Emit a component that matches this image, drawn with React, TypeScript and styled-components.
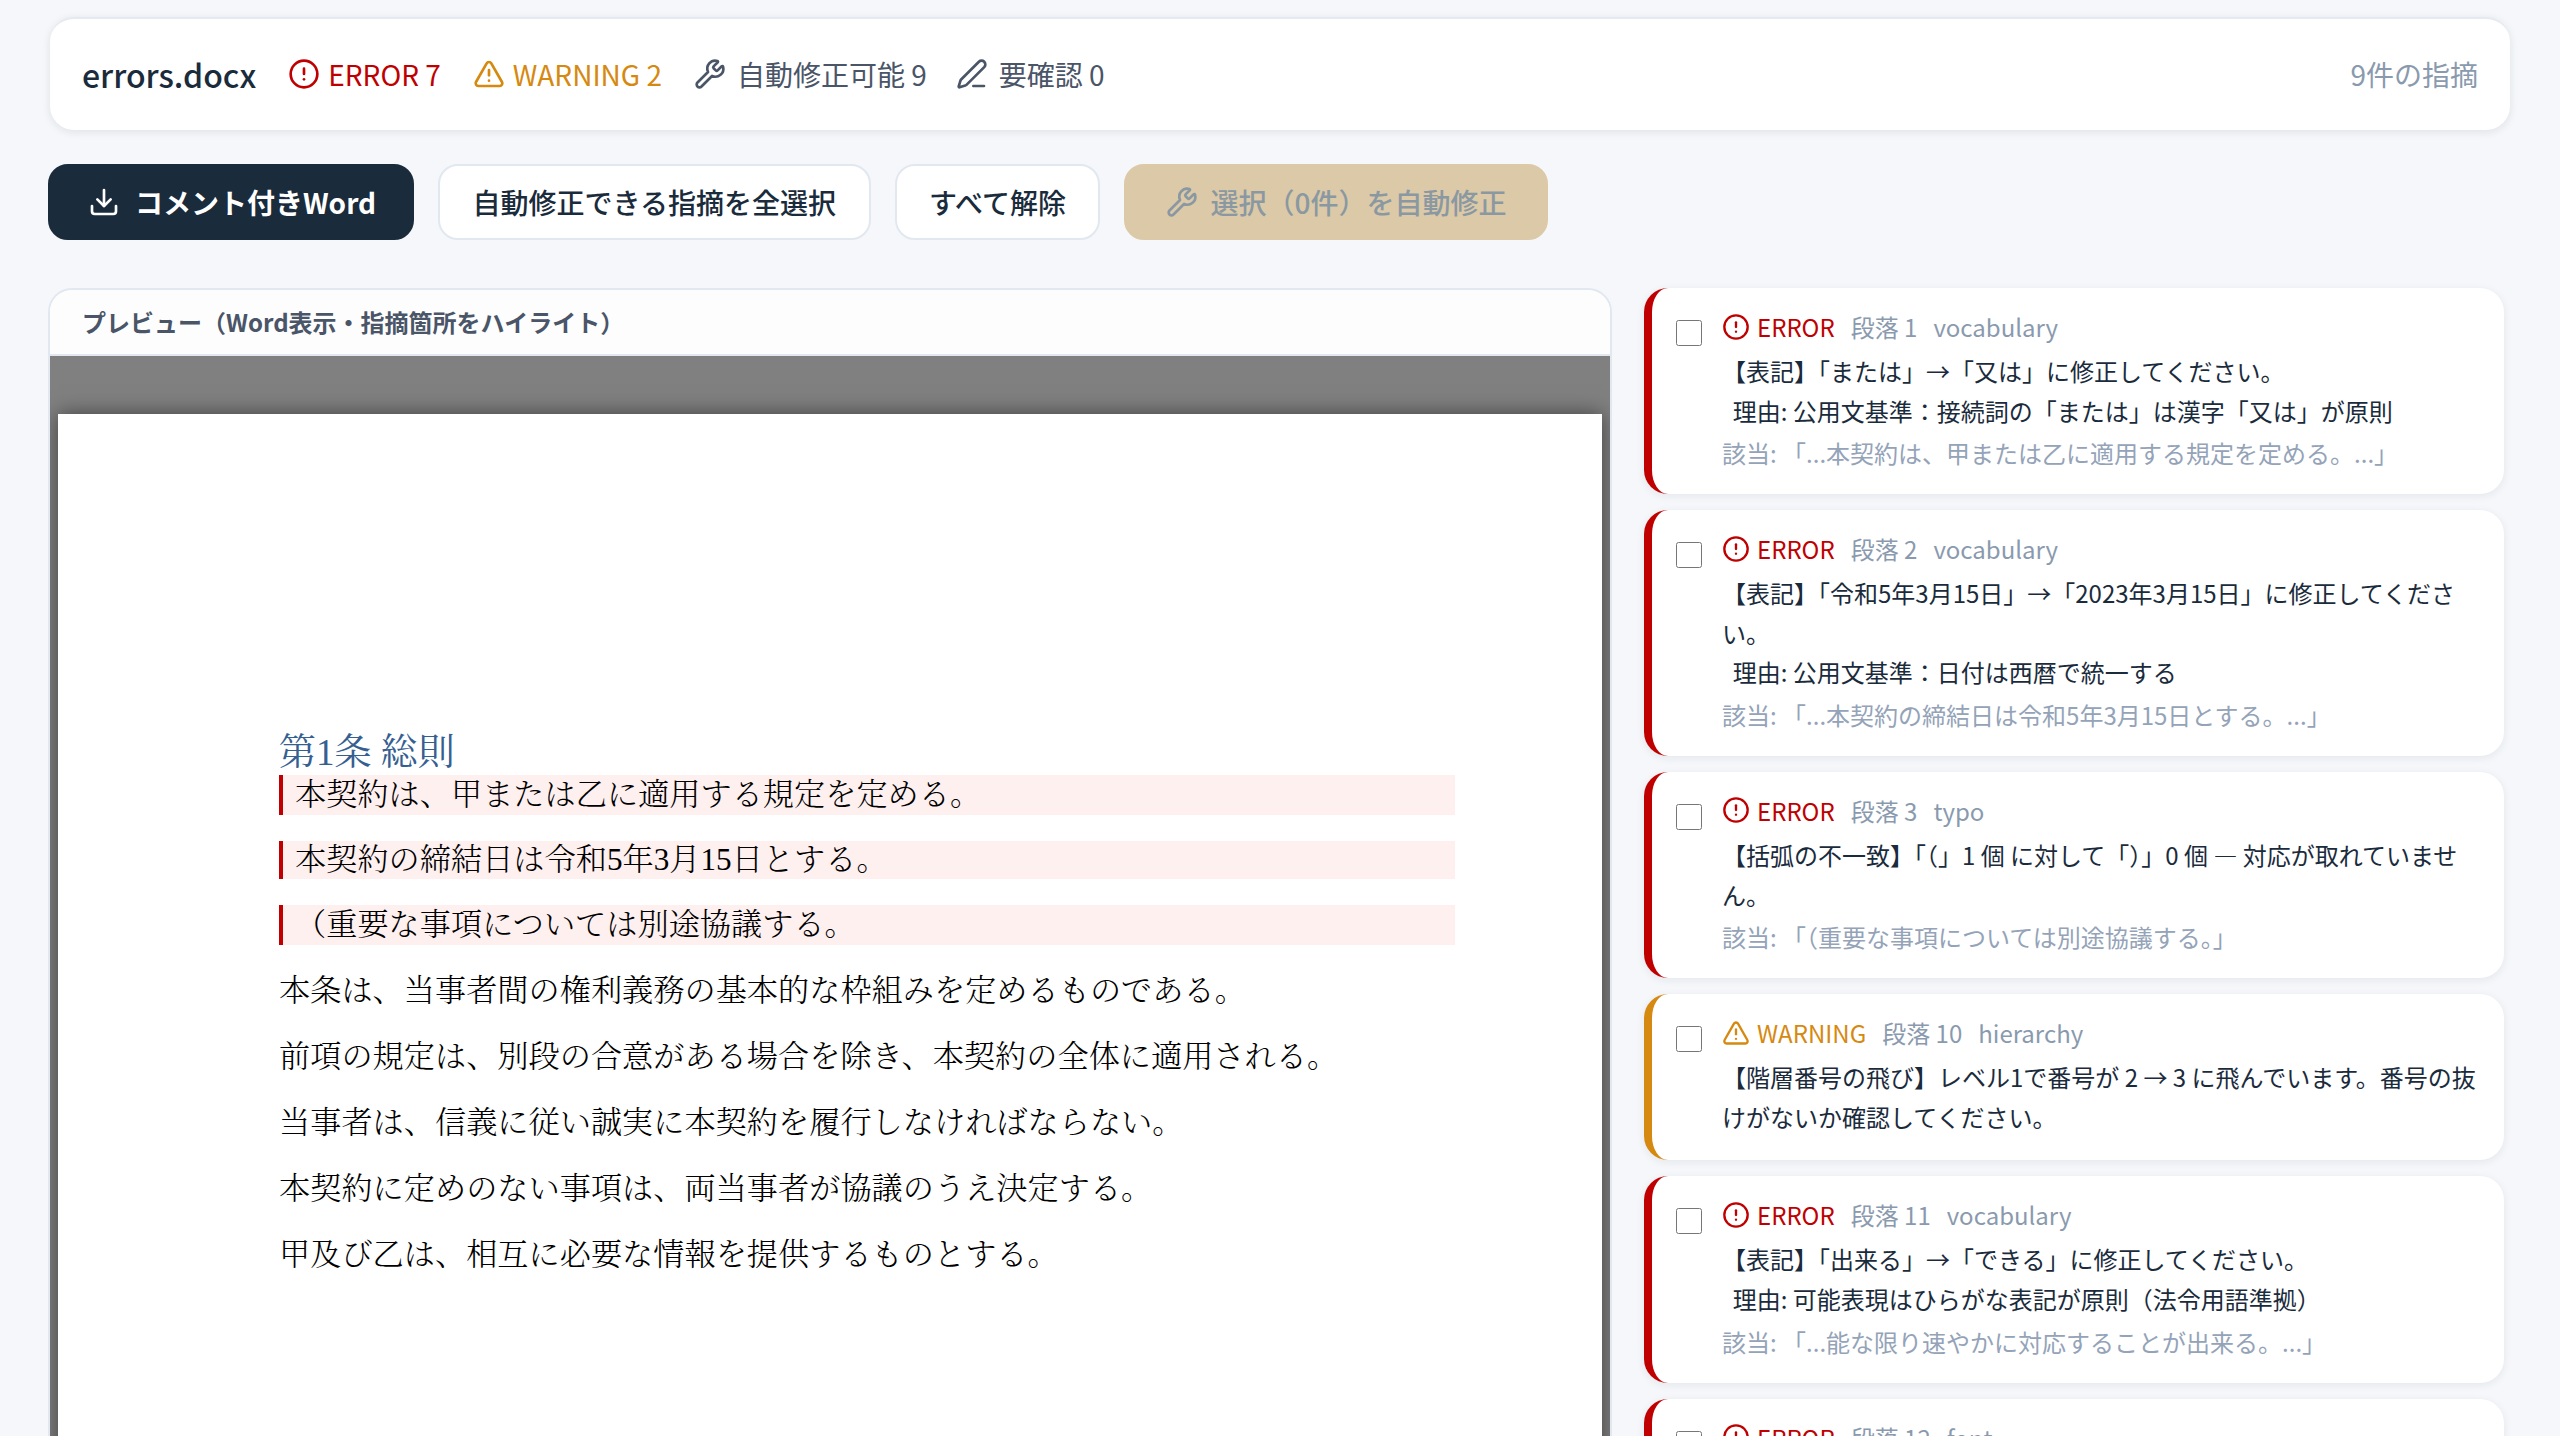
import React from "react";
import styled, { createGlobalStyle } from "styled-components";
import { CircleAlert, TriangleAlert, Wrench, PenLine, Download } from "lucide-react";

const RED = "#c00000";
const AMBER = "#d68910";

const GlobalStyle = createGlobalStyle`
html, body {
  margin: 0;
  padding: 0;
  height: 100%;
  overflow: hidden;
  background: #f5f7fa;
}
* { box-sizing: border-box; }
body {
  font-family: "Noto Sans CJK JP", "Noto Sans", sans-serif;
  color: #1a2b3c;
}
`;

const Page = styled.div`
  height: 1436px;
  overflow: hidden;
  padding: 17px 50px 0 48px;
  display: flex;
  flex-direction: column;
`;

const TopBar = styled.header`
  height: 113px;
  margin-left: 2px;
  flex-shrink: 0;
  display: flex;
  align-items: center;
  gap: 32px;
  padding: 0 32px 2px;
  background: #fff;
  border-radius: 24px;
  border-top: 2px solid #e6eaf0;
  box-shadow: 0 2px 8px rgba(26, 43, 60, 0.1);
  font-size: 28px;
`;

const FileName = styled.span`
  font-size: 32px;
  font-weight: 500;
  color: #1a2b3c;
`;

const Stat = styled.span<{ $color: string; $gap?: number }>`
  display: inline-flex;
  align-items: center;
  gap: ${(p) => p.$gap ?? 8}px;
  color: ${(p) => p.$color};
`;

const ReviewStat = styled(Stat)`
  margin-left: -3px;
`;

const TotalCount = styled.span`
  margin-left: auto;
  color: #8a9aae;
`;

const Toolbar = styled.div`
  display: flex;
  gap: 24px;
  margin-top: 34px;
  flex-shrink: 0;
`;

const Button = styled.button`
  height: 76px;
  display: inline-flex;
  align-items: center;
  gap: 12px;
  padding: 0 32.5px;
  font-family: inherit;
  font-size: 28px;
  font-weight: 500;
  color: #1a2b3c;
  background: #fff;
  border: 2px solid #e2e8f0;
  border-radius: 20px;
`;

const PrimaryButton = styled(Button)`
  padding: 0 36px 0 38px;
  gap: 15px;
  background: #1a2b3c;
  border-color: #1a2b3c;
  color: #fff;
  font-weight: 700;
`;

const DisabledButton = styled(Button)`
  padding: 0 40px;
  background: #dcc9a7;
  border-color: #dcc9a7;
  color: #8a98a2;
`;

const Main = styled.div`
  display: flex;
  gap: 32px;
  margin-top: 48px;
  flex: 1;
  min-height: 0;
`;

const PreviewPanel = styled.section`
  width: 1564px;
  flex-shrink: 0;
  border: 2px solid #e2e8f0;
  border-bottom: 0;
  border-radius: 24px 24px 0 0;
  background: #fff;
  overflow: hidden;
  display: flex;
  flex-direction: column;
`;

const PanelTitle = styled.div`
  height: 66px;
  flex-shrink: 0;
  display: flex;
  align-items: center;
  padding: 0 32px 1px;
  font-size: 24px;
  font-weight: 700;
  color: #4a5568;
  background: #fdfdfe;
  border-bottom: 2px solid #e2e8f0;
`;

const DocArea = styled.div`
  flex: 1;
  background: #808080;
  padding: 58px 8px 0;
  overflow: hidden;
`;

const DocPage = styled.div`
  height: 1100px;
  background: #fff;
  box-shadow: 0 0 20px rgba(0, 0, 0, 0.5);
  padding: 317px 147px 0 221px;
  font-family: "Liberation Serif", "Noto Serif CJK JP", serif;
  color: #000;
`;

const DocHeading = styled.h2`
  margin: 0;
  font-size: 37px;
  font-weight: 400;
  line-height: 44px;
  color: #365f91;
`;

const DocPara = styled.p<{ $flagged?: boolean; $tight?: boolean }>`
  margin: 0 0 26px;
  font-size: 31.2px;
  font-weight: 300;
  line-height: ${(p) => (p.$tight ? 38 : 40)}px;
  white-space: pre-wrap;
  ${(p) =>
    p.$flagged
      ? `
    background: #fff0f0;
    border-left: 4px solid ${RED};
    padding-left: 12px;
  `
      : ""}
`;

const FindingList = styled.div`
  flex: 1;
  min-width: 0;
  padding-right: 6px;
  display: flex;
  flex-direction: column;
  gap: 16px;
`;

const Card = styled.article<{ $color: string }>`
  flex-shrink: 0;
  display: flex;
  gap: 20px;
  padding: 19px 27px 24px 24px;
  background: #fff;
  border-left: 8px solid ${(p) => p.$color};
  border-radius: 24px;
  box-shadow: 0 2px 8px rgba(26, 43, 60, 0.08);
`;

const Check = styled.input`
  width: 26px;
  height: 26px;
  margin: 13px 0 0;
  flex-shrink: 0;
`;

const CardBody = styled.div`
  flex: 1;
  min-width: 0;
`;

const CardHead = styled.div`
  display: flex;
  align-items: center;
  gap: 16px;
  font-size: 24px;
  line-height: 39px;
  margin-bottom: 5px;
`;

const Severity = styled.span<{ $color: string }>`
  display: inline-flex;
  align-items: center;
  gap: 7px;
  color: ${(p) => p.$color};
`;

const Meta = styled.span`
  color: #8a9aae;
`;

const Message = styled.div`
  font-size: 24px;
  line-height: 39.6px;
  white-space: pre-wrap;
  color: #1a2b3c;
`;

const Excerpt = styled.div`
  margin-top: 5px;
  font-size: 24px;
  line-height: 35px;
  color: #94a3b8;
`;

type Finding = {
  level: "ERROR" | "WARNING";
  para: number;
  kind: string;
  message: string;
  excerpt?: string;
};

const findings: Finding[] = [
  {
    level: "ERROR",
    para: 1,
    kind: "vocabulary",
    message: "【表記】「または」→「又は」に修正してください。\n  理由: 公用文基準：接続詞の「または」は漢字「又は」が原則",
    excerpt: "該当: 「...本契約は、甲または乙に適用する規定を定める。...」",
  },
  {
    level: "ERROR",
    para: 2,
    kind: "vocabulary",
    message: "【表記】「令和5年3月15日」→「2023年3月15日」に修正してください。\n  理由: 公用文基準：日付は西暦で統一する",
    excerpt: "該当: 「...本契約の締結日は令和5年3月15日とする。...」",
  },
  {
    level: "ERROR",
    para: 3,
    kind: "typo",
    message: "【括弧の不一致】「（」1 個 に対して「）」0 個 — 対応が取れていません。",
    excerpt: "該当: 「（重要な事項については別途協議する。」",
  },
  {
    level: "WARNING",
    para: 10,
    kind: "hierarchy",
    message: "【階層番号の飛び】レベル1で番号が 2 → 3 に飛んでいます。番号の抜けがないか確認してください。",
  },
  {
    level: "ERROR",
    para: 11,
    kind: "vocabulary",
    message: "【表記】「出来る」→「できる」に修正してください。\n  理由: 可能表現はひらがな表記が原則（法令用語準拠）",
    excerpt: "該当: 「...能な限り速やかに対応することが出来る。...」",
  },
  {
    level: "ERROR",
    para: 12,
    kind: "font",
    message: "",
  },
];

const paragraphs = [
  { text: "本契約は、甲または乙に適用する規定を定める。", flagged: true },
  { text: "本契約の締結日は令和5年3月15日とする。", flagged: true, tight: true },
  { text: "（重要な事項については別途協議する。", flagged: true },
  { text: "本条は、当事者間の権利義務の基本的な枠組みを定めるものである。" },
  { text: "前項の規定は、別段の合意がある場合を除き、本契約の全体に適用される。" },
  { text: "当事者は、信義に従い誠実に本契約を履行しなければならない。" },
  { text: "本契約に定めのない事項は、両当事者が協議のうえ決定する。" },
  { text: "甲及び乙は、相互に必要な情報を提供するものとする。" },
];

function FindingCard({ item }: { item: Finding }) {
  const isError = item.level === "ERROR";
  const color = isError ? RED : AMBER;
  const Icon = isError ? CircleAlert : TriangleAlert;

  return (
    <Card $color={color}>
      <Check type="checkbox" />
      <CardBody>
        <CardHead>
          <Severity $color={color}>
            <Icon size={28} />
            {item.level}
          </Severity>
          <Meta>段落 {item.para}</Meta>
          <Meta>{item.kind}</Meta>
        </CardHead>
        <Message>{item.message}</Message>
        {item.excerpt && <Excerpt>{item.excerpt}</Excerpt>}
      </CardBody>
    </Card>
  );
}

export default function App() {
  return (
    <>
      <GlobalStyle />
      <Page lang="ja">
        <TopBar>
          <FileName>errors.docx</FileName>
          <Stat $color={RED}>
            <CircleAlert size={32} />
            ERROR 7
          </Stat>
          <Stat $color={AMBER}>
            <TriangleAlert size={32} />
            WARNING 2
          </Stat>
          <Stat $color="#4a5568" $gap={11}>
            <Wrench size={32} />
            自動修正可能 9
          </Stat>
          <ReviewStat $color="#4a5568" $gap={11}>
            <PenLine size={32} />
            要確認 0
          </ReviewStat>
          <TotalCount>9件の指摘</TotalCount>
        </TopBar>

        <Toolbar>
          <PrimaryButton>
            <Download size={32} />
            コメント付きWord
          </PrimaryButton>
          <Button>自動修正できる指摘を全選択</Button>
          <Button>すべて解除</Button>
          <DisabledButton disabled>
            <Wrench size={32} />
            選択（0件）を自動修正
          </DisabledButton>
        </Toolbar>

        <Main>
          <PreviewPanel>
            <PanelTitle>プレビュー（Word表示・指摘箇所をハイライト）</PanelTitle>
            <DocArea>
              <DocPage>
                <DocHeading>第1条 総則</DocHeading>
                {paragraphs.map((p) => (
                  <DocPara key={p.text} $flagged={p.flagged} $tight={p.tight}>
                    {p.text}
                  </DocPara>
                ))}
              </DocPage>
            </DocArea>
          </PreviewPanel>

          <FindingList>
            {findings.map((f) => (
              <FindingCard key={f.para} item={f} />
            ))}
          </FindingList>
        </Main>
      </Page>
    </>
  );
}
